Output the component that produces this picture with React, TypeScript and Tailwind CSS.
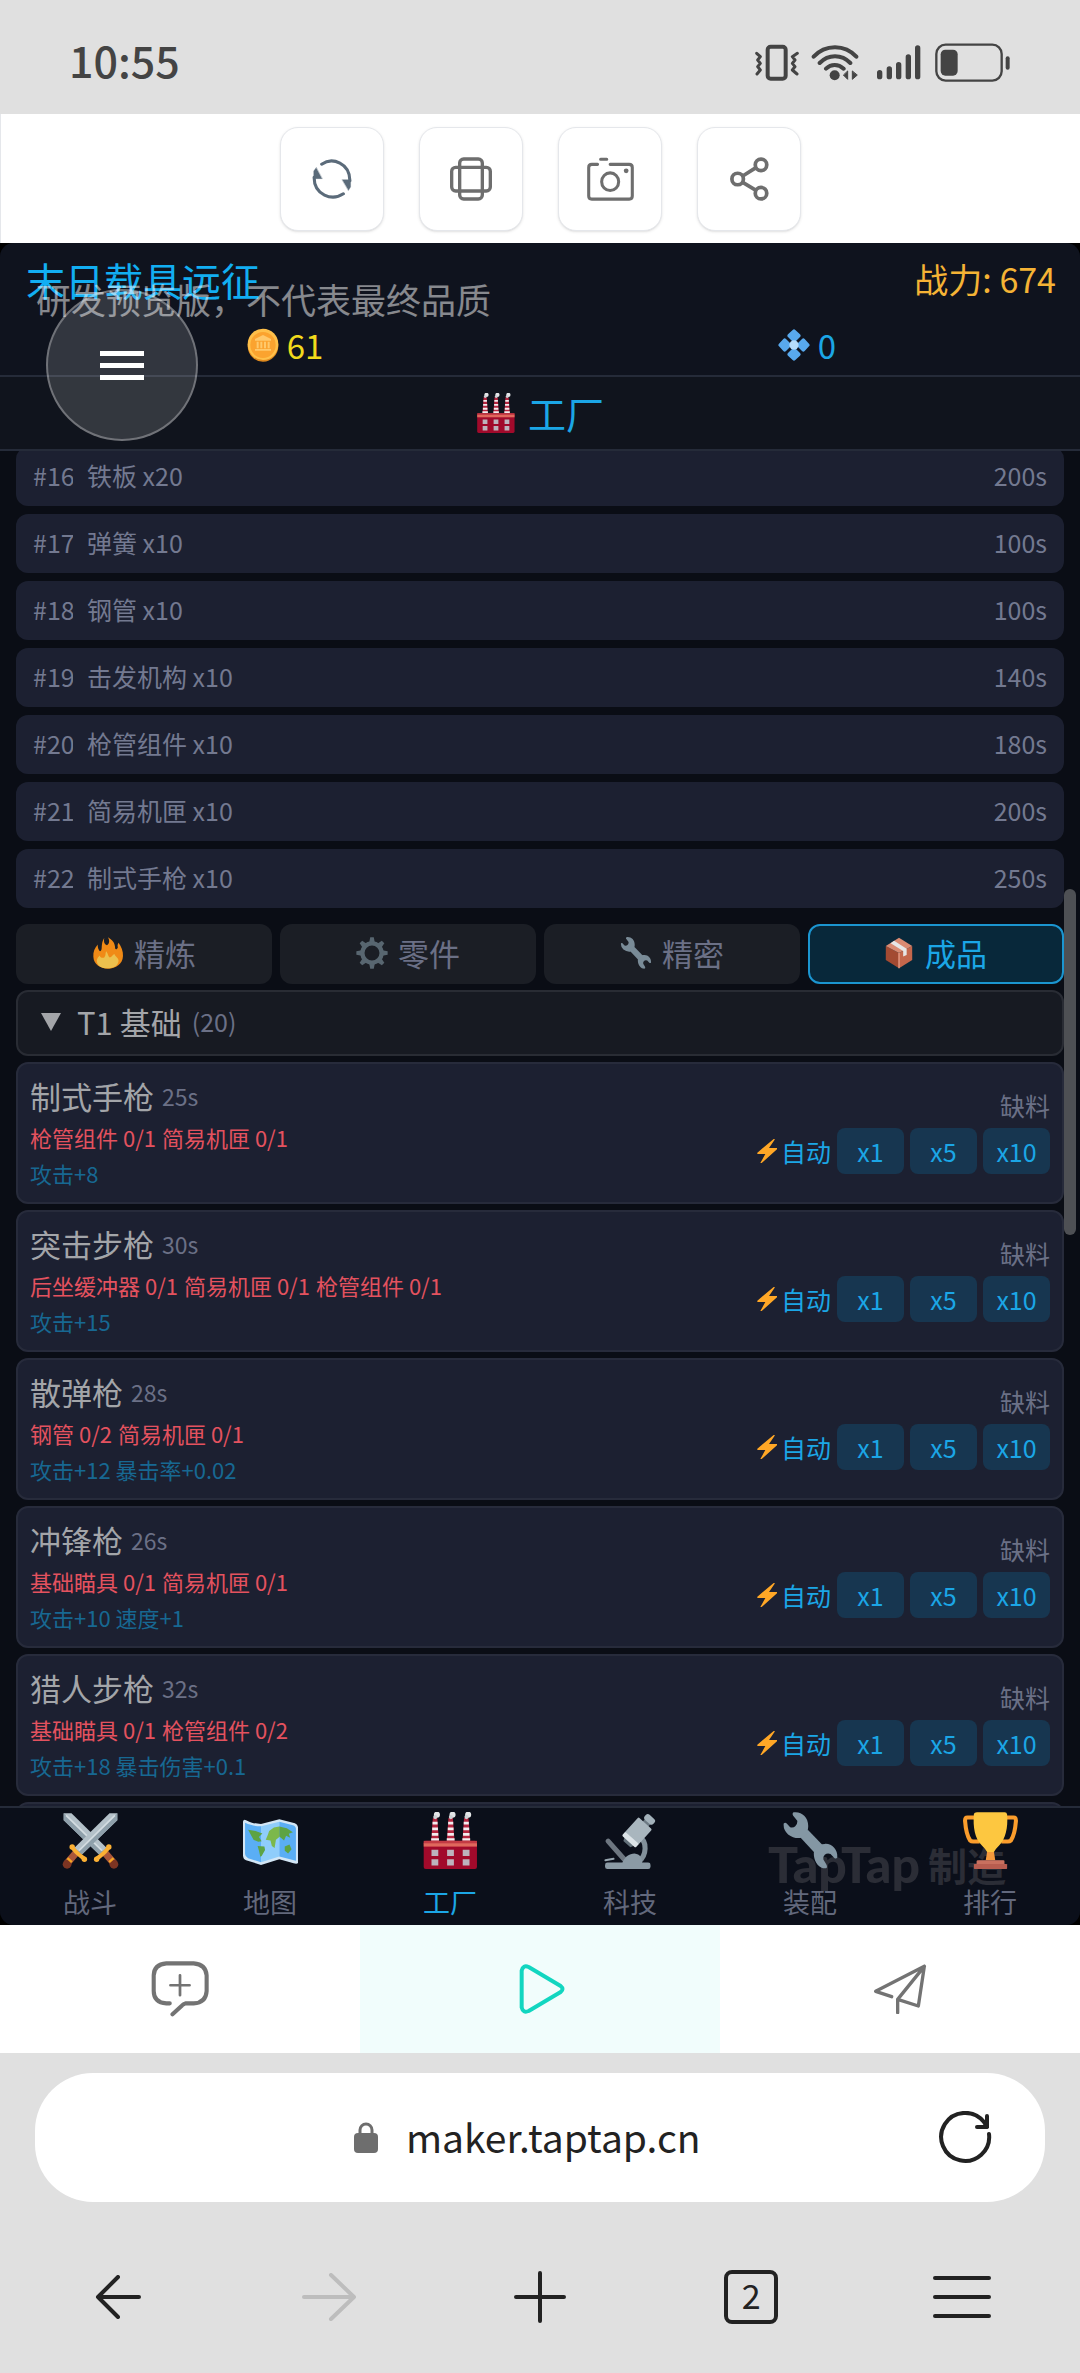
import type { ReactNode } from 'react'

const queue = [
    { id: '#16', name: '铁板 x20', time: '200s' },
    { id: '#17', name: '弹簧 x10', time: '100s' },
    { id: '#18', name: '钢管 x10', time: '100s' },
    { id: '#19', name: '击发机构 x10', time: '140s' },
    { id: '#20', name: '枪管组件 x10', time: '180s' },
    { id: '#21', name: '简易机匣 x10', time: '200s' },
    { id: '#22', name: '制式手枪 x10', time: '250s' },
]

const recipes = [
    { name: '制式手枪', time: '25s', needs: ['枪管组件 0/1', '简易机匣 0/1'], stats: '攻击+8' },
    { name: '突击步枪', time: '30s', needs: ['后坐缓冲器 0/1', '简易机匣 0/1', '枪管组件 0/1'], stats: '攻击+15' },
    { name: '散弹枪', time: '28s', needs: ['钢管 0/2', '简易机匣 0/1'], stats: '攻击+12 暴击率+0.02' },
    { name: '冲锋枪', time: '26s', needs: ['基础瞄具 0/1', '简易机匣 0/1'], stats: '攻击+10 速度+1' },
    { name: '猎人步枪', time: '32s', needs: ['基础瞄具 0/1', '枪管组件 0/2'], stats: '攻击+18 暴击伤害+0.1' },
]

function Swords({ className }: any) {
    const sword = (
        <>
            <path d="M5 4H28L132 106 110 126 5 24Z" fill="#b4c1c9" />
            <path d="M5 4 121 116 110 126 5 24Z" fill="#8fa0ab" />
            <path d="M12 10 118 114" stroke="#d3dce1" strokeWidth="5" />
            <path d="M128 122 154 152" stroke="#a9563a" strokeWidth="21" />
            <circle cx="153" cy="154" r="13" fill="#7c3422" />
            <path d="M139 148 152 136" stroke="#f5a623" strokeWidth="7" />
            <path d="M102 138C114 128 130 118 137 104" stroke="#fbb034" strokeWidth="12" strokeLinecap="round" fill="none" />
            <circle cx="102" cy="139" r="8" fill="#fbb034" />
            <circle cx="138" cy="103" r="8" fill="#fbb034" />
        </>
    )
    return (
        <svg viewBox="0 0 168 168" className={className} aria-hidden="true">
            {sword}
            <g transform="translate(168 0) scale(-1 1)">{sword}</g>
        </svg>
    )
}

function WorldMap({ className }: any) {
    return (
        <svg viewBox="0 0 168 168" className={className} aria-hidden="true">
            <path d="M3 28Q4 21 12 24C28 33 40 34 56 35L110 21 156 33Q164 36 165 44V150Q162 154 152 151L110 139 56 156 12 142Q3 138 3 128Z" fill="#d3e6f5" />
            <path d="M9 32C26 40 40 42 56 42V148L18 136Q9 132 9 124Z" fill="#5aaef5" />
            <path d="M56 42 110 29V131L56 148Z" fill="#8fcdfb" />
            <path d="M110 29 150 39Q159 42 159 50V144L110 131Z" fill="#5aaef5" />
            <path d="M18 52 40 56 60 63 50 74 58 86 48 88 34 82Z" fill="#5da344" />
            <path d="M46 100 66 102 68 112 58 130 54 132 50 114Z" fill="#5da344" />
            <path d="M80 56 94 46 110 43V74L100 82 96 106 88 100 84 84 70 82 76 68Z" fill="#7cb84c" />
            <path d="M110 43 132 48 150 60 138 64 142 76 130 70 124 84 110 72Z" fill="#5da344" />
            <path d="M126 102 140 96 146 110 136 122 126 114Z" fill="#5da344" />
        </svg>
    )
}

function Factory({ className }: any) {
    return (
        <svg viewBox="0 0 168 168" className={className} aria-hidden="true">
            {[27, 73, 119].map((x) => (
                <g key={x}>
                    <path d={`M${x + 5} 18H${x + 18}L${x + 23} 86H${x}Z`} fill="#b5253f" />
                    <path d={`M${x + 4} 33H${x + 19}M${x + 3} 50H${x + 20}M${x + 2} 66H${x + 21}M${x} 81H${x + 23}`} stroke="#f3eef0" strokeWidth="8" />
                    <circle cx={x + 17} cy="8" r="9" fill="#e4e6e8" />
                    <circle cx={x + 12} cy="15" r="6" fill="#cfd3d6" />
                </g>
            ))}
            <rect x="5" y="85" width="157" height="83" rx="6" fill="#a10a2b" />
            <rect x="5" y="85" width="157" height="8" fill="#c33a44" />
            <rect x="5" y="92" width="157" height="10" fill="#e0685c" />
            {[28, 74, 120].map((x) => (
                <path key={x} d={`M${x} 111h20v19h-20zM${x} 139h20v19h-20z`} fill="#bdb3bd" />
            ))}
        </svg>
    )
}

function Microscope({ className }: any) {
    return (
        <svg viewBox="0 0 168 168" className={className} aria-hidden="true">
            <path d="M110 74C134 86 132 128 108 146" stroke="#82909a" strokeWidth="15" fill="none" />
            <path d="M18 86 66 140" stroke="#6d7680" strokeWidth="15" strokeLinecap="round" />
            <path d="M10 142 34 138" stroke="#98a6b0" strokeWidth="6" strokeLinecap="round" />
            <path d="M60 150C66 132 80 122 96 122 112 124 120 136 118 152Z" fill="#8b9aa5" />
            <rect x="9" y="149" width="134" height="19" rx="7" fill="#8b9aa5" />
            <g transform="translate(2 5) rotate(42 100 55)">
                <rect x="92" y="-2" width="22" height="26" fill="#6d7a84" />
                <rect x="86" y="-9" width="34" height="20" rx="8" fill="#a3b1ba" />
                <rect x="74" y="18" width="54" height="64" rx="4" fill="#a9b6be" />
                <path d="M80 82H124L116 100H88Z" fill="#62707a" />
                <rect x="74" y="76" width="54" height="15" rx="4" fill="#dce3e7" />
            </g>
        </svg>
    )
}

function Wrench({ className }: any) {
    return (
        <svg viewBox="0 0 168 168" className={className} aria-hidden="true">
            <g fill="#8497a4">
                <path d="M55 76 76 52 118 96 98 122Z" />
                <path d="M34 1C58 -3 80 16 77 46Q76 70 58 76 36 80 18 66 3 52 5 34C8 31 11 31 14 34L24 45Q34 47 39 42 46 36 45 26L33 11Q29 5 34 1Z" />
                <path d="M163 134C165 110 146 92 126 94 104 94 92 108 94 128 96 150 112 168 130 166 134 164 133 158 130 153L122 140Q120 132 126 126 134 120 143 124L155 136Q160 139 163 134Z" />
            </g>
        </svg>
    )
}

function Trophy({ className }: any) {
    return (
        <svg viewBox="0 0 168 168" className={className} aria-hidden="true">
            <path d="M40 16H16Q9 16 9 26C11 52 16 72 24 84Q28 88 36 87H52" stroke="#fb9d2c" strokeWidth="12" fill="none" />
            <path d="M128 16H152Q159 16 159 26C157 52 152 72 144 84Q140 88 132 87H116" stroke="#fb9d2c" strokeWidth="12" fill="none" />
            <path d="M76 104H92L98 142H70Z" fill="#f59a3c" />
            <path d="M35 6Q36 1 44 1H126Q132 1 133 7C136 48 128 78 110 98Q98 110 94 118H74Q70 110 58 98C38 78 32 46 35 6Z" fill="#fdc740" />
            <rect x="43" y="142" width="82" height="16" rx="4" fill="#c9705f" />
            <rect x="35" y="153" width="98" height="15" rx="2" fill="#b85d50" />
        </svg>
    )
}

function Flame({ className }: any) {
    return (
        <svg viewBox="0 0 90 94" className={className} aria-hidden="true">
            <path d="M45 1C56 8 66 16 66 34 68 38 72 36 74 30 72 26 74 20 76 17 84 28 90 42 89 56 88 80 68 93 45 93S3 80 2 58C1 44 6 32 15 22 14 30 18 40 22 42 28 38 26 30 27 24 28 12 32 6 34 3 32 14 34 22 42 24 50 20 50 10 45 1Z" fill="#f08a16" />
            <path d="M40 42C46 50 44 56 50 60 56 60 58 52 64 50 66 58 76 60 76 70 74 86 62 92 44 92 26 92 12 84 12 68 14 60 18 58 20 54 24 62 30 62 34 60 40 54 36 48 40 42Z" fill="#ecc04d" />
        </svg>
    )
}

function Gear({ className }: any) {
    return (
        <svg viewBox="0 0 90 90" className={className} aria-hidden="true">
            {[0, 45, 90, 135, 180, 225, 270, 315].map((a) => (
                <path key={a} d="M37 16 40 1H50L53 16Z" fill="#586670" transform={`rotate(${a} 45 45)`} />
            ))}
            <circle cx="45" cy="45" r="27" fill="none" stroke="#586670" strokeWidth="12" />
        </svg>
    )
}

function Box({ className }: any) {
    return (
        <svg viewBox="0 0 80 92" className={className} aria-hidden="true">
            <path d="M2 26 40 46V90L2 66Z" fill="#a34a32" />
            <path d="M78 26 40 46V90L78 66Z" fill="#c4674c" />
            <path d="M40 2 78 26 40 46 2 26Z" fill="#d98a72" />
            <path d="M16 18 26 11 62 34 62 52 52 56V40Z" fill="#e6e6e6" />
            <path d="M40 46V90" stroke="#e59a84" strokeWidth="4" />
        </svg>
    )
}

function Bolt({ className }: any) {
    return (
        <svg viewBox="0 0 60 74" className={className} aria-hidden="true">
            <path d="M50 1 1 42V46H25L10 73H14L60 32V28H36L54 2Z" fill="#ffa726" />
        </svg>
    )
}

function Coin({ className }: any) {
    return (
        <svg viewBox="0 0 96 100" className={className} aria-hidden="true">
            <ellipse cx="48" cy="52" rx="46" ry="48" fill="#e08a1e" />
            <ellipse cx="48" cy="48" rx="46" ry="47" fill="#ffc04a" />
            <ellipse cx="48" cy="50" rx="38" ry="39" fill="#fba32f" />
            <path d="M48 20 72 32V37H24V32ZM29 40h6v20h-6zM40 40h6v20h-6zM51 40h6v20h-6zM62 40h6v20h-6zM24 62h48v5h-48z" fill="#ffc96b" />
        </svg>
    )
}

function Gem({ className }: any) {
    return (
        <svg viewBox="0 0 96 96" className={className} aria-hidden="true">
            {[0, 90, 180, 270].map((a) => (
                <path key={a} d="M44 3Q48 -1 52 3L66 16Q70 20 66 24L54 36H42L30 24Q26 20 30 16Z" fill="#58a9ee" transform={`rotate(${a} 48 48)`} />
            ))}
            <circle cx="48" cy="48" r="14" fill="#b5dcfa" />
        </svg>
    )
}

function ToolButton({ label, children }: { label: string; children: ReactNode }) {
    return (
        <button aria-label={label} className="flex h-[104px] w-[104px] items-center justify-center rounded-[18px] border border-gray-200 bg-white text-[#6e6e6e] shadow-sm">
            {children}
        </button>
    )
}

function StatusBar() {
    return (
        <div className="flex h-[114px] shrink-0 items-center justify-between pt-3 pr-[70px] pl-[69px] text-[#444]">
            <div className="pb-2 text-[43px] leading-none font-medium">10:55</div>
            <div className="flex items-center gap-3">
                <svg width="44" height="38" viewBox="0 0 132 114" fill="none" stroke="currentColor" aria-hidden="true">
                    <rect x="38" y="8" width="54" height="96" rx="9" strokeWidth="12" />
                    <path d="M5 28 16 38 8 48 16 58 8 68 16 78 6 90M127 28 112 38 120 48 112 58 120 68 112 78 126 90" strokeWidth="9" strokeLinecap="round" strokeLinejoin="round" />
                </svg>
                <svg width="48" height="38" viewBox="0 0 144 114" fill="none" stroke="currentColor" strokeLinecap="round" className="mr-1" aria-hidden="true">
                    <path d="M8 38C42 0 102 0 136 38M26 57C52 30 92 30 118 57M45 74C60 59 82 59 98 74" strokeWidth="12" />
                    <circle cx="71" cy="94" r="15" fill="currentColor" stroke="none" />
                    <path d="M110 82V106L98 94ZM124 82V106L138 94Z" fill="currentColor" strokeWidth="3" />
                </svg>
                <svg width="48" height="38" viewBox="0 0 144 114" fill="none" stroke="currentColor" strokeWidth="16" strokeLinecap="round" aria-hidden="true">
                    <path d="M14 86V98M43 75V98M71 62V98M100 39V98M128 12V98" />
                </svg>
                <svg width="75" height="40" viewBox="0 0 225 120" fill="none" stroke="currentColor" aria-hidden="true">
                    <rect x="4" y="5" width="196" height="108" rx="28" strokeWidth="7" />
                    <rect x="17" y="20" width="51" height="78" rx="14" fill="currentColor" stroke="none" />
                    <path d="M218 46V74" strokeWidth="12" strokeLinecap="round" />
                </svg>
            </div>
        </div>
    )
}

function Toolbar() {
    return (
        <div className="flex h-[129px] shrink-0 items-center justify-center gap-[35px] border-l border-gray-200 bg-white">
            <ToolButton label="刷新">
                <svg width="40" height="42" viewBox="0 0 116 122" fill="none" stroke="#5b6b7a" strokeWidth="9" strokeLinecap="round" aria-hidden="true">
                    <path d="M28 18C60 -4 110 16 110 66M91 104C58 126 6 108 6 56" />
                    <path d="M88 63H112V84L106 94ZM29 60H5V38L12 28Z" fill="#5b6b7a" strokeWidth="1" />
                </svg>
            </ToolButton>
            <ToolButton label="旋转屏幕">
                <svg width="42" height="44" viewBox="0 0 126 130" fill="none" stroke="currentColor" strokeWidth="10" aria-hidden="true">
                    <rect x="29" y="5" width="68" height="120" rx="12" />
                    <rect x="5" y="30" width="116" height="71" rx="12" />
                </svg>
            </ToolButton>
            <ToolButton label="截图">
                <svg width="47" height="44" viewBox="0 0 138 128" fill="none" stroke="currentColor" strokeWidth="9" strokeLinecap="round" aria-hidden="true">
                    <path d="M31 21H14Q5 21 5 30V114Q5 123 14 123H124Q133 123 133 114V30Q133 21 124 21H68M40 6H58" />
                    <ellipse cx="68" cy="72" rx="25" ry="26" />
                    <circle cx="115" cy="40" r="7" fill="currentColor" stroke="none" />
                </svg>
            </ToolButton>
            <ToolButton label="分享">
                <svg width="39" height="44" viewBox="0 0 114 130" fill="none" stroke="currentColor" strokeWidth="11" aria-hidden="true">
                    <circle cx="91" cy="23" r="17" />
                    <circle cx="22" cy="65" r="17" />
                    <circle cx="91" cy="107" r="17" />
                    <path d="M37 56 75 32M37 75 75 98" />
                </svg>
            </ToolButton>
        </div>
    )
}

function GameHeader() {
    return (
        <header>
            <div className="h-[134px] border-b-2 border-[#252b39] bg-[#0f131e] text-[#f5b335]">
                <div className="flex h-[72px] items-center justify-between pr-6 pl-[26px]">
                    <h1 className="text-[39px] leading-none text-[#12aef2]">末日载具远征</h1>
                    <div className="text-[34px] leading-none">战力: 674</div>
                </div>
                <div className="grid grid-cols-2 pr-3 pl-6 text-[33px] leading-[60px]">
                    <div className="flex items-center justify-center gap-2 text-[#f2da1c]">
                        <Coin className="h-[34px] w-8" />61
                    </div>
                    <div className="flex items-center justify-center gap-2 text-[#1ba6e6]">
                        <Gem className="h-8 w-8" />0
                    </div>
                </div>
            </div>
            <div className="flex h-[74px] items-center justify-center gap-3 border-b-2 border-[#252b39] bg-[#10141d] text-[#1ba6e6]">
                <Factory className="h-10 w-10" />
                <h2 className="text-[38px] leading-none">工厂</h2>
            </div>
        </header>
    )
}

function Tab({ title, icon, active }: any) {
    return (
        <button
            role="tab"
            aria-selected={!!active}
            className={
                active
                    ? 'flex h-[60px] items-center justify-center gap-3 rounded-xl border-2 border-[#1b95d0] bg-[#08283a] pb-[2px] text-[#1ba6e6]'
                    : 'flex h-[60px] items-center justify-center gap-[10px] rounded-xl bg-[#1b1e25] pb-[2px] text-[#6b7086]'
            }
        >
            {icon}
            {title}
        </button>
    )
}

function Recipe({ name, time, needs, stats }: any) {
    return (
        <div className="flex h-[142px] items-center justify-between rounded-xl border-2 border-[#272b3b] bg-[#1c2031] px-3">
            <div className="pb-[2px]">
                <div className="flex h-[46px] items-center gap-2">
                    <span className="text-[31px] text-[#a3a5a9]">{name}</span>
                    <span className="text-[23px] text-[#6b7086]">{time}</span>
                </div>
                <div className="flex h-9 items-center gap-[6px] text-[22px] text-[#e4525f]">
                    {needs.map((need: string) => <span key={need}>{need}</span>)}
                </div>
                <div className="flex h-9 items-center text-[22px] text-[#176892]">{stats}</div>
            </div>
            <div className="pb-[10px] text-[25px] leading-none">
                <div className="flex h-[46px] items-center justify-end text-[#6b7086]">缺料</div>
                <div className="flex h-[46px] items-center gap-[6px] text-[#1ba6e6]">
                    <button className="flex items-center gap-1">
                        <Bolt className="h-[26px] w-5" />自动
                    </button>
                    <button className="h-full w-[67px] rounded-lg bg-[#173650]">x1</button>
                    <button className="h-full w-[67px] rounded-lg bg-[#173650]">x5</button>
                    <button className="h-full w-[67px] rounded-lg bg-[#173650]">x10</button>
                </div>
            </div>
        </div>
    )
}

function NavItem({ label, active, children }: { label: string; active?: boolean; children: ReactNode }) {
    return (
        <button className={active ? 'relative flex flex-col items-center gap-3 pt-1 text-[#1ba6e6]' : 'relative flex flex-col items-center gap-3 pt-1 text-[#62687c]'}>
            {children}
            <span className="text-[27px] leading-[42px]">{label}</span>
        </button>
    )
}

function GameNav() {
    return (
        <nav className="relative h-[119px] shrink-0 border-t-2 border-[#252b39] bg-[#0b0f1a]">
            <div className="absolute right-[74px] bottom-9 flex items-center gap-2 leading-none text-[#2b2d36]">
                <span className="font-['Lato'] text-[50px] font-black">TapTap</span>
                <span className="text-[39px] font-bold">制造</span>
            </div>
            <div className="grid grid-cols-6">
                <NavItem label="战斗"><Swords className="h-[57px] w-[57px]" /></NavItem>
                <NavItem label="地图"><WorldMap className="h-[57px] w-[57px]" /></NavItem>
                <NavItem label="工厂" active><Factory className="h-[57px] w-[57px]" /></NavItem>
                <NavItem label="科技"><Microscope className="h-[57px] w-[57px]" /></NavItem>
                <NavItem label="装配"><Wrench className="h-[57px] w-[57px]" /></NavItem>
                <NavItem label="排行"><Trophy className="h-[57px] w-[57px]" /></NavItem>
            </div>
        </nav>
    )
}

function Game() {
    return (
        <div className="flex min-h-0 flex-1 flex-col bg-black">
            <div className="relative flex min-h-0 flex-1 flex-col overflow-hidden rounded-[14px] bg-[#0a0d15]">
                <GameHeader />
                <main className="relative min-h-0 flex-1 overflow-hidden px-4">
                    <ul className="-mt-1 flex flex-col gap-2 text-[25px] text-[#737990]">
                        {queue.map((item) => (
                            <li key={item.id} className="flex h-[59px] items-center rounded-xl bg-[#1c2031] px-[17px] pb-[2px]">
                                <span className="mr-[14px] w-10 overflow-hidden whitespace-nowrap">{item.id}</span>
                                <span className="flex-1">{item.name}</span>
                                <span>{item.time}</span>
                            </li>
                        ))}
                    </ul>
                    <div role="tablist" className="mt-4 grid grid-cols-4 gap-2 text-[31px]">
                        <Tab title="精炼" icon={<Flame className="h-8 w-8" />} />
                        <Tab title="零件" icon={<Gear className="h-8 w-8" />} />
                        <Tab title="精密" icon={<Wrench className="h-8 w-8 opacity-90" />} />
                        <Tab title="成品" icon={<Box className="h-8 w-7" />} active />
                    </div>
                    <button className="mt-[6px] mb-[6px] flex h-[66px] w-full items-center rounded-xl border-2 border-[#292c34] bg-[#171a22] px-[23px] pb-[2px] text-[31px] text-[#a3a5a9]">
                        <svg width="20" height="18" viewBox="0 0 20 18" className="mr-4" aria-hidden="true">
                            <path d="M0 0H20L10 18Z" fill="#a3a5a9" />
                        </svg>
                        T1 基础
                        <span className="ml-[10px] text-[25px] text-[#6b7086]">(20)</span>
                    </button>
                    <div className="flex flex-col gap-[6px]">
                        {recipes.map((recipe) => <Recipe key={recipe.name} {...recipe} />)}
                        <div className="h-[142px] rounded-xl border-2 border-[#272b3b] bg-[#1c2031]"></div>
                    </div>
                    <div className="absolute top-[438px] right-1 h-[346px] w-3 rounded-full bg-[#4e5054]"></div>
                </main>
                <GameNav />
                <button aria-label="菜单" className="absolute top-[46px] left-[46px] flex h-[152px] w-[152px] flex-col items-center justify-center gap-[7px] rounded-full border-2 border-white/30 bg-white/15">
                    <span className="h-[5px] w-11 bg-white"></span>
                    <span className="h-[5px] w-11 bg-white"></span>
                    <span className="h-[5px] w-11 bg-white"></span>
                </button>
                <p className="absolute top-9 left-9 text-[35px] leading-[40px] text-white/50">研发预览版，不代表最终品质</p>
            </div>
        </div>
    )
}

function MakerBar() {
    return (
        <div className="grid h-32 shrink-0 grid-cols-3 bg-white text-[#737373]">
            <button aria-label="新对话" className="flex items-center justify-center">
                <svg width="58" height="56" viewBox="0 0 168 164" fill="none" stroke="currentColor" strokeWidth="12" strokeLinecap="round" strokeLinejoin="round" aria-hidden="true">
                    <path d="M54 124H44Q7 122 7 88V42Q8 10 44 7H124Q160 10 162 42V88Q160 122 124 124H100Q94 126 90 130L62 156" />
                    <path d="M84 42V100M56 71H112" strokeWidth="8" />
                </svg>
            </button>
            <button aria-label="试玩" className="flex items-center justify-center bg-[#f1fdfc] pl-1">
                <svg width="46" height="50" viewBox="0 0 138 150" fill="none" stroke="#12d6c0" strokeWidth="12" strokeLinejoin="round" aria-hidden="true">
                    <path d="M8 20Q12 2 29 9L125 66Q136 75 125 84L29 141Q12 148 8 130Z" />
                </svg>
            </button>
            <button aria-label="发布" className="flex items-center justify-center">
                <svg width="54" height="50" viewBox="0 0 158 150" fill="none" stroke="currentColor" strokeWidth="10" strokeLinecap="round" strokeLinejoin="round" aria-hidden="true">
                    <path d="M54 98 6 82 152 7 134 126 72 106 152 7M72 106V146" />
                </svg>
            </button>
        </div>
    )
}

function AddressBar() {
    return (
        <div className="mx-[35px] mt-5 grid h-[129px] shrink-0 grid-cols-[1fr_auto_1fr] items-center rounded-[58px] bg-white">
            <label htmlFor="address" className="col-start-2 flex items-center gap-7">
                <svg width="24" height="32" viewBox="0 0 24 32" aria-hidden="true">
                    <path d="M6 13V8a6 6 0 0 1 12 0v5" fill="none" stroke="#6e6e6e" strokeWidth="3" />
                    <rect y="11" width="24" height="20" rx="4" fill="#6e6e6e" />
                </svg>
                <input id="address" aria-label="网址" defaultValue="maker.taptap.cn" className="w-80 bg-transparent pb-1 text-[39px] leading-[60px] text-[#222] outline-none" />
            </label>
            <button aria-label="重新加载" className="mr-[52px] justify-self-end">
                <svg width="54" height="54" viewBox="0 0 54 54" fill="none" stroke="#222" strokeWidth="4" strokeLinecap="round" strokeLinejoin="round" aria-hidden="true">
                    <path d="M50 23A24 24 0 1 1 45 11L48 16M48 5V16H38" />
                </svg>
            </button>
        </div>
    )
}

function BrowserNav() {
    return (
        <nav className="grid h-[171px] shrink-0 grid-cols-5 px-3 pt-[18px] text-[#222]">
            <button aria-label="后退" className="flex items-center justify-center">
                <svg width="46" height="44" viewBox="0 0 46 44" fill="none" stroke="currentColor" strokeWidth="4" strokeLinecap="round" strokeLinejoin="round" aria-hidden="true">
                    <path d="M23 2 3 22 23 42M3 22H44" />
                </svg>
            </button>
            <button aria-label="前进" disabled className="flex items-center justify-center text-[#bdbdbd]">
                <svg width="54" height="48" viewBox="0 0 54 48" fill="none" stroke="currentColor" strokeWidth="4" strokeLinecap="round" strokeLinejoin="round" aria-hidden="true">
                    <path d="M29 2 52 24 29 46M2 24H52" />
                </svg>
            </button>
            <button aria-label="新标签页" className="flex items-center justify-center">
                <svg width="52" height="52" viewBox="0 0 52 52" fill="none" stroke="currentColor" strokeWidth="4" strokeLinecap="round" aria-hidden="true">
                    <path d="M26 2V50M2 26H50" />
                </svg>
            </button>
            <button aria-label="标签页" className="flex items-center justify-center">
                <span className="flex h-[54px] w-[54px] items-center justify-center rounded-lg border-4 border-[#222] pb-1 text-[34px] leading-none">2</span>
            </button>
            <button aria-label="更多" className="flex flex-col items-center justify-center gap-[15px]">
                <span className="h-1 w-[58px] rounded-full bg-[#222]"></span>
                <span className="h-1 w-[58px] rounded-full bg-[#222]"></span>
                <span className="h-1 w-[58px] rounded-full bg-[#222]"></span>
            </button>
        </nav>
    )
}

export default function App() {
    return (
        <div className="flex h-screen flex-col bg-[#e0e0e0] font-['Noto_Sans_CJK_SC',sans-serif]">
            <StatusBar />
            <Toolbar />
            <Game />
            <MakerBar />
            <AddressBar />
            <BrowserNav />
        </div>
    )
}
